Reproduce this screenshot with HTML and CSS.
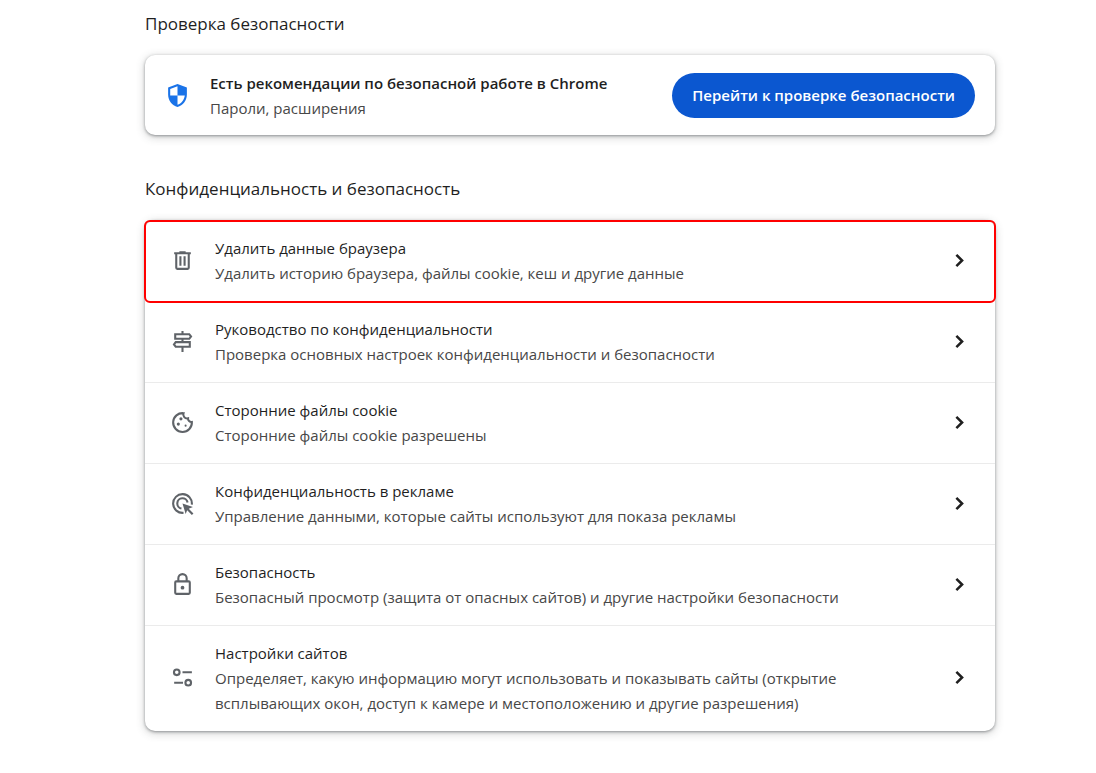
FILE: index.html
```html
<!DOCTYPE html>
<html lang="ru">
<head>
    <meta charset="UTF-8">
    <meta name="viewport" content="width=device-width, initial-scale=1.0">
    <title>Конфиденциальность и безопасность</title>
    <link rel="stylesheet" href="styles.css">
</head>
<body>
    <main class="settings">
        <section class="section">
            <h2 class="section-title">Проверка безопасности</h2>
            <div class="card check">
                <svg class="icon shield" viewBox="0 0 24 24" aria-hidden="true"><path d="M12 1L3 4.4v6.6c0 5.55 3.84 10.74 9 12 5.16-1.26 9-6.45 9-12V4.4L12 1zm0 10.99h7c-.53 4.12-3.28 7.79-7 8.94V12H5V5.8l7-2.61v8.8z"/></svg>
                <div class="text">
                    <div class="check-title">Есть рекомендации по безопасной работе в Chrome</div>
                    <div class="sub">Пароли, расширения</div>
                </div>
                <button class="action" type="button">Перейти к проверке безопасности</button>
            </div>
        </section>

        <section class="section">
            <h2 class="section-title">Конфиденциальность и безопасность</h2>
            <div class="card list">
                <button class="row selected" type="button">
                    <svg class="icon" viewBox="0 0 24 24" aria-hidden="true"><path d="M4 4h5V3h6v1h5v2h-1v13a2 2 0 0 1-2 2H7a2 2 0 0 1-2-2V6H4zM7 6v13h10V6zM9 8h2v9H9zM13 8h2v9h-2z" fill-rule="evenodd"/></svg>
                    <span class="text">
                        <span class="title">Удалить данные браузера</span>
                        <span class="sub">Удалить историю браузера, файлы cookie, кеш и другие данные</span>
                    </span>
                    <svg class="chevron" viewBox="0 0 24 24" aria-hidden="true"><path d="M9 6.5l5.500 5.500L9 17.500"/></svg>
                </button>
                <button class="row" type="button">
                    <svg class="icon line" viewBox="0 0 24 24" aria-hidden="true"><path d="M12 2v3M12 9.500v3M12 17v5M5 5h13.500l1.700 2.200-1.700 2.200H5zM19 12.600H5.500l-1.700 2.200 1.700 2.200H19z"/></svg>
                    <span class="text">
                        <span class="title">Руководство по конфиденциальности</span>
                        <span class="sub">Проверка основных настроек конфиденциальности и безопасности</span>
                    </span>
                    <svg class="chevron" viewBox="0 0 24 24" aria-hidden="true"><path d="M9 6.5l5.500 5.500L9 17.500"/></svg>
                </button>
                <button class="row" type="button">
                    <svg class="icon line" viewBox="0 0 24 24" aria-hidden="true">
                        <path d="M13 3.100A9 9 0 1 0 21 11.500a3.300 3.300 0 0 1-3.700-3.500A3.700 3.700 0 0 1 13 3.100z"/>
                        <g class="solid"><circle cx="10.500" cy="8.500" r="1.500"/><circle cx="8" cy="13.500" r="1.500"/><circle cx="15" cy="15" r="1"/></g>
                    </svg>
                    <span class="text">
                        <span class="title">Сторонние файлы cookie</span>
                        <span class="sub">Сторонние файлы cookie разрешены</span>
                    </span>
                    <svg class="chevron" viewBox="0 0 24 24" aria-hidden="true"><path d="M9 6.5l5.500 5.500L9 17.500"/></svg>
                </button>
                <button class="row" type="button">
                    <svg class="icon line" viewBox="0 0 24 24" aria-hidden="true">
                        <path d="M13 20.940A9 9 0 1 1 20.940 13M11 16.900A5 5 0 1 1 16.900 11"/>
                        <path class="solid" d="M12 12l10 3.300-4 1.700 4.500 4.500-1.500 1.500-4.500-4.500L15 22z"/>
                    </svg>
                    <span class="text">
                        <span class="title">Конфиденциальность в рекламе</span>
                        <span class="sub">Управление данными, которые сайты используют для показа рекламы</span>
                    </span>
                    <svg class="chevron" viewBox="0 0 24 24" aria-hidden="true"><path d="M9 6.5l5.500 5.500L9 17.500"/></svg>
                </button>
                <button class="row" type="button">
                    <svg class="icon line" viewBox="0 0 24 24" aria-hidden="true">
                        <rect x="5" y="9" width="14" height="12" rx="1"/>
                        <path d="M8 9V6a4 4 0 0 1 8 0v3"/>
                        <circle class="solid" cx="12" cy="15" r="1.800"/>
                    </svg>
                    <span class="text">
                        <span class="title">Безопасность</span>
                        <span class="sub">Безопасный просмотр (защита от опасных сайтов) и другие настройки безопасности</span>
                    </span>
                    <svg class="chevron" viewBox="0 0 24 24" aria-hidden="true"><path d="M9 6.5l5.500 5.500L9 17.500"/></svg>
                </button>
                <button class="row" type="button">
                    <svg class="icon line" viewBox="0 0 24 24" aria-hidden="true">
                        <circle cx="6.500" cy="7" r="2.700"/><path d="M12 7h9M4 17h8.500"/><circle cx="17.500" cy="17" r="2.700"/>
                    </svg>
                    <span class="text">
                        <span class="title">Настройки сайтов</span>
                        <span class="sub">Определяет, какую информацию могут использовать и показывать сайты (открытие всплывающих окон, доступ к камере и местоположению и другие разрешения)</span>
                    </span>
                    <svg class="chevron" viewBox="0 0 24 24" aria-hidden="true"><path d="M9 6.5l5.500 5.500L9 17.500"/></svg>
                </button>
            </div>
        </section>
    </main>
</body>
</html>
```

FILE: styles.css
```css
* { box-sizing: border-box; }
body { margin: 0; background: #fff; color: #1f1f1f; font-family: "Segoe UI", "Open Sans", "Noto Sans", sans-serif; font-size: 15px; line-height: 25px; }
button { font: inherit; color: inherit; border: 0; cursor: pointer; }
.settings { padding: 8px 101px 40px 145px; }
.section { margin-bottom: 38px; }
.section-title { margin: 0; padding-bottom: 16px; font-size: 17px; font-weight: 400; line-height: 31px; }
.card { background: #fff; border-radius: 10px; box-shadow: 0 1px 3px rgba(60, 64, 67, 0.5), 0 2px 8px 1px rgba(60, 64, 67, 0.2); }
.check { display: flex; align-items: center; gap: 20px; height: 80px; padding: 0 20px; }
.list { padding-top: 1px; }
.text { flex: 1; min-width: 0; padding-top: 2px; }
.check-title { font-weight: 600; }
.title, .sub { display: block; }
.sub { color: #474747; }
.action { padding: 10px 20px; background: #0b57d0; color: #fff; font-weight: 600; border-radius: 23px; }
.row { display: flex; align-items: center; gap: 20px; width: 100%; padding: 13px 23px 15px 25px; background: none; text-align: left; border-bottom: 1px solid #ebebeb; }
.row:last-child { border-bottom: 0; }
.row .text { padding-right: 60px; }
.row.selected { outline: 2px solid #f00; outline-offset: -1px; border-radius: 5px; }
.icon { flex: none; width: 25px; height: 25px; fill: #5f6368; }
.shield { fill: #1a73e8; }
.line { fill: none; stroke: #5f6368; stroke-width: 2; }
.solid { fill: #5f6368; stroke: none; }
.chevron { flex: none; width: 25px; height: 25px; fill: none; stroke: #1f1f1f; stroke-width: 2.4; }
```
